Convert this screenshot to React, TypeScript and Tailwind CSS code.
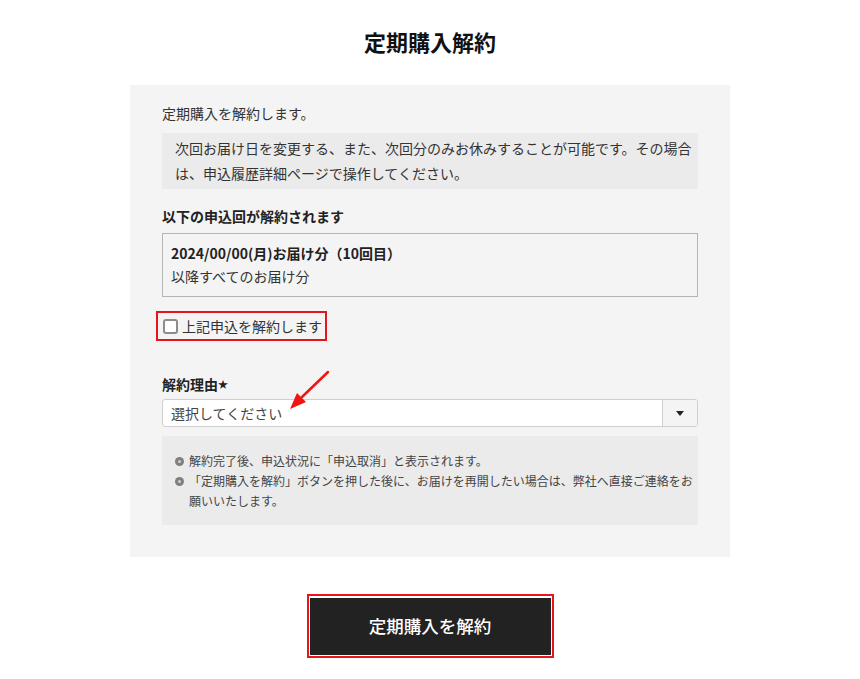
export default function App() {
  return (
    <div className="relative min-h-[679px] w-full bg-white font-['Noto_Sans_CJK_JP','Noto_Sans',sans-serif] text-[#333]">
      <div className="flex flex-col items-center">
        {/* TITLE */}
        <h1 className="pt-[27px] text-[22px] leading-[28px] font-bold text-[#111]">定期購入解約</h1>

        {/* PANEL */}
        <div className="mt-[30px] w-[600px] bg-[#f4f4f4] px-8 pt-[16px] pb-[32px]">
          <p className="text-[14px] leading-6">定期購入を解約します。</p>
          <div className="mt-2 bg-[#ebebeb] px-[13px] py-[3px] text-[14px] leading-[25px] whitespace-nowrap">
            <p>次回お届け日を変更する、また、次回分のみお休みすることが可能です。その場合</p>
            <p>は、申込履歴詳細ページで操作してください。</p>
          </div>

          <p className="mt-[15px] text-[14px] leading-6 font-bold text-[#222]">以下の申込回が解約されます</p>
          <div className="mt-[5px] border border-[#b5b5b5] px-2 py-2 text-[14px] leading-[23px]">
            <p className="font-bold text-[#222]">2024/00/00(月)お届け分（10回目）</p>
            <p>以降すべてのお届け分</p>
          </div>

          {/* CHECKBOX */}
          <label className="-ml-[6px] mt-[14px] inline-flex h-[30px] items-center gap-[4px] border-2 border-[#e8141b] pr-[3px] pl-[5px]">
            <span className="h-[15px] w-[15px] rounded-[3px] border-2 border-[#8c8c8c] bg-white" />
            <span className="text-[14px] leading-6">上記申込を解約します</span>
          </label>

          {/* REASON */}
          <p className="mt-[31px] text-[14px] leading-6 font-bold text-[#222]">
            解約理由<span className="text-[10px] align-top">★</span>
          </p>
          <div className="mt-[3px] flex h-[28px] overflow-hidden rounded-[3px] border border-[#cfcfcf] bg-white">
            <div className="flex flex-1 items-center pl-2 text-[14px] text-[#444]">選択してください</div>
            <div className="flex w-[35px] items-center justify-center border-l border-[#cfcfcf] bg-[#f4f4f4]">
              <svg width="8" height="5" viewBox="0 0 8 5">
                <path d="M0 0h8L4 5z" fill="#222" />
              </svg>
            </div>
          </div>

          {/* NOTES */}
          <div className="mt-[9px] bg-[#ebebeb] pt-[15px] pb-[14px] pl-[13px] pr-3 text-[12px] leading-[20px] text-[#444] whitespace-nowrap">
            <div className="flex">
              <span className="mt-[5.5px] mr-[5px] flex h-[9px] w-[9px] shrink-0 items-center justify-center rounded-full bg-[#808080]">
                <span className="h-[3px] w-[3px] rounded-full bg-[#d0d0d0]" />
              </span>
              <p>解約完了後、申込状況に「申込取消」と表示されます。</p>
            </div>
            <div className="flex">
              <span className="mt-[5.5px] mr-[5px] flex h-[9px] w-[9px] shrink-0 items-center justify-center rounded-full bg-[#808080]">
                <span className="h-[3px] w-[3px] rounded-full bg-[#d0d0d0]" />
              </span>
              <div>
                <p>「定期購入を解約」ボタンを押した後に、お届けを再開したい場合は、弊社へ直接ご連絡をお</p>
                <p>願いいたします。</p>
              </div>
            </div>
          </div>
        </div>

        {/* SUBMIT */}
        <div className="mt-[37px] border-2 border-[#e8141b] px-[1px] pt-[2px] pb-[1px]">
          <button className="flex h-[57px] w-[241px] items-center justify-center bg-[#222] text-[17.5px] font-medium text-white">
            定期購入を解約
          </button>
        </div>
      </div>

      {/* ANNOTATION ARROW */}
      <svg className="pointer-events-none absolute top-0 left-0" width="860" height="679">
        <line x1="328" y1="372" x2="302" y2="397" stroke="#f01414" strokeWidth="2.5" strokeLinecap="round" />
        <polygon points="290,409 306,402 297,393" fill="#f01414" />
      </svg>
    </div>
  );
}
